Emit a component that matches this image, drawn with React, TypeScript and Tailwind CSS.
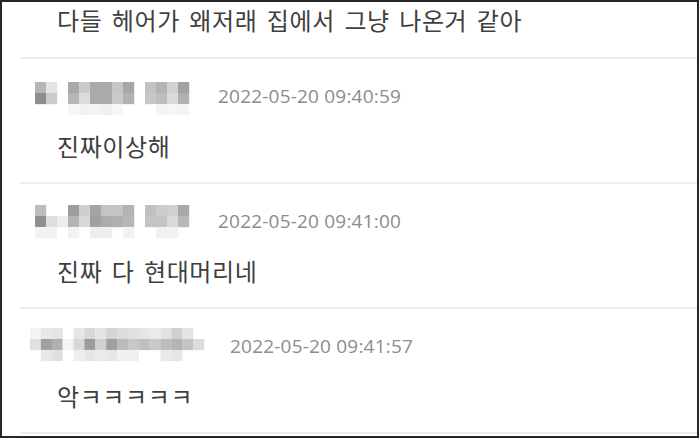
type Cell = string | null;

type Comment = {
  name: Cell[][];
  nameX: number;
  nameW: number;
  nameY: number;
  gap: number;
  time: string;
  text: string;
};

const comments: Comment[] = [
  {
    nameX: 15,
    nameW: 154,
    nameY: 0,
    gap: 29,
    time: "2022-05-20 09:40:59",
    text: "진짜이상해",
    name: [
      ["#b6b6b6", "#e4e4e4", null, "#a9a9a9", "#cbcbcb", "#aaaaaa", "#aaaaaa", "#c6c6c6", "#a6a6a6", null, "#c2c2c2", "#b3b3b3", "#d2d2d2", "#a2a2a2"],
      ["#8e8e8e", "#c9cdcd", null, "#b6b6b6", "#dcdcdc", "#aaaaaa", "#aaaaaa", "#cacaca", "#b2b2b2", null, "#c6c6c6", "#bdbdbd", "#dadada", "#b0b0b0"],
      [null, null, null, "#f6f6f6", "#f2f2f2", "#f4f4f4", "#f0f0f0", "#f6f6f6", null, null, null, "#f4f4f4", "#f6f6f6", "#f4f4f4"],
    ],
  },
  {
    nameX: 15,
    nameW: 154,
    nameY: -2,
    gap: 29,
    time: "2022-05-20 09:41:00",
    text: "진짜 다 현대머리네",
    name: [
      ["#bdbdbd", null, null, "#9e9e9e", "#cfcfcf", "#a4a4a4", "#c4c4c4", "#c4c4c4", "#b4b4b4", null, "#c0c0c0", "#cccccc", "#d0d0d0", "#a8a8a8"],
      ["#8f8f8f", "#dedede", "#ececec", "#b4b4b4", "#d8d8d8", "#a0a0a0", "#acacac", "#b0b0b0", "#b8b8b8", null, "#c4c4c4", "#c4c4c4", "#dadada", "#b8b8b8"],
      ["#f2f2f2", "#f2f2f2", null, "#f2f2f2", null, "#eeeeee", "#eeeeee", null, "#f2f2f2", null, null, "#f2f2f2", "#f2f2f2", null],
    ],
  },
  {
    nameX: 10,
    nameW: 174,
    nameY: -4,
    gap: 26,
    time: "2022-05-20 09:41:57",
    text: "악ㅋㅋㅋㅋㅋ",
    name: [
      ["#f4f4f4", "#e8e8e8", "#e4e4e4", null, "#e6e6e6", "#d8d8d8", "#e4e4e4", "#d4d4d4", "#dcdcdc", "#e2e2e2", "#e6e6e6", "#eaeaea", "#e2e2e2", "#d0d0d0", "#e4e4e4", null],
      ["#e0e0e0", "#a0a0a0", "#b0b0b0", "#f4f4f4", "#d8d8d8", "#9c9c9c", "#d0d0d0", "#a0a0a0", "#bcbcbc", "#c8c8c8", "#c0c0c0", "#cacaca", "#bcbcbc", "#b4b4b4", "#c4c4c4", "#dcdcdc"],
      [null, "#e8e8e8", "#e0e0e0", null, "#eeeeee", "#e6e6e6", "#eaeaea", "#e6e6e6", "#f0f0f0", "#f0f0f0", null, null, "#eaeaea", "#e6e6e6", null, null],
    ],
  },
];

// blurred-out nickname, drawn as a block mosaic
const Mosaic = ({ rows, width, oy }: { rows: Cell[][]; width: number; oy: number }) => {
  const cols = rows[0].length;
  return (
    <svg
      width={width}
      height={34}
      viewBox={`0 ${-oy} ${cols} 3.1`}
      preserveAspectRatio="none"
      className="shrink-0 overflow-visible"
    >
      {rows.map((r, y) =>
        r.map((c, x) =>
          c ? <rect key={`${x}-${y}`} x={x} y={y} width={1.02} height={1.02} fill={c} /> : null
        )
      )}
    </svg>
  );
};

const App = () => {
  return (
    <div
      className="w-[699px] h-[438px] border-2 border-[#262626] bg-white overflow-hidden"
      style={{ fontFamily: '"Noto Sans CJK KR", "Noto Sans", sans-serif' }}
    >
      <div className="h-[55px] pt-[3px] pl-[55px] text-[24px] leading-[30px] tracking-[0.6px] [word-spacing:3.5px] text-[#3f3f3f]">
        다들 헤어가 왜저래 집에서 그냥 나온거 같아
      </div>
      {comments.map((c, i) => (
        <div key={i} className="ml-[18px] h-[125px] border-t-2 border-[#ececec] pt-[23px]">
          <div className="flex items-start h-[34px]" style={{ paddingLeft: c.nameX }}>
            <Mosaic rows={c.name} width={c.nameW} oy={(c.nameY / 34) * 3.1} />
            <span
              className="mt-[2px] text-[19px] leading-[24px] tracking-[0.2px] text-[#8c8c8c] font-['Open_Sans',sans-serif]"
              style={{ marginLeft: c.gap }}
            >
              {c.time}
            </span>
          </div>
          <div className="mt-[15px] pl-[37px] text-[24px] leading-[30px] tracking-[0.6px] [word-spacing:3.5px] text-[#3f3f3f]">
            {c.text}
          </div>
        </div>
      ))}
      <div className="ml-[18px] border-t-2 border-[#ececec]" />
    </div>
  );
};

export default App;
